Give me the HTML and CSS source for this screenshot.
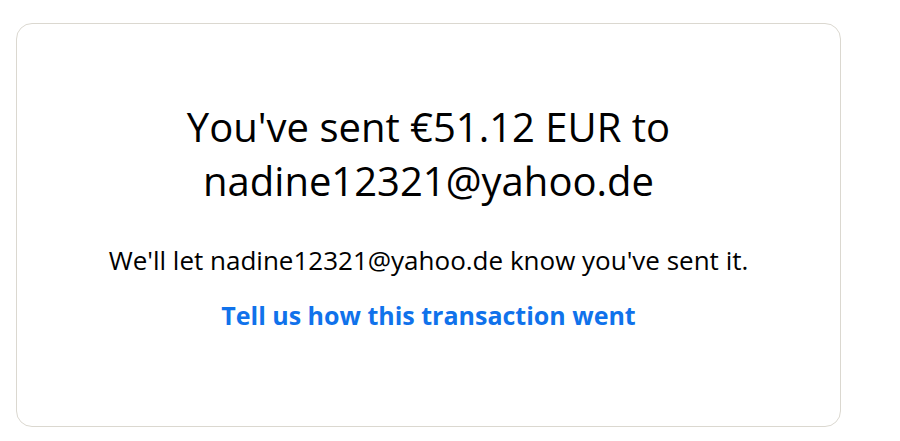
FILE: index.html
```html
<!DOCTYPE html>
<html lang="en">
<head>
<meta charset="utf-8">
<link rel="stylesheet" href="styles.css">
</head>
<body>
<main class="card">
  <h1 class="title">You've sent €51.12 EUR to nadine12321@yahoo.de</h1>
  <p class="note">We'll let nadine12321@yahoo.de know you've sent it.</p>
  <a class="feedback" href="#">Tell us how this transaction went</a>
</main>
</body>
</html>
```

FILE: styles.css
```css
html, body {
  margin: 0;
  padding: 0;
  background: #ffffff;
}
body {
  font-family: "Open Sans", "Noto Sans", sans-serif;
  color: #000000;
  padding: 23px 0 0 16px;
}
.card {
  box-sizing: border-box;
  width: 825px;
  height: 404px;
  border: 1px solid #dbd8d0;
  border-radius: 16px;
  display: flex;
  flex-direction: column;
  align-items: center;
  padding: 76px 40px 0;
}
.title {
  margin: 0;
  max-width: 560px;
  text-align: center;
  font-size: 40px;
  font-weight: 400;
  line-height: 54px;
}
.note {
  margin: 37px 0 0;
  font-size: 26px;
  line-height: 30px;
}
.feedback {
  margin-top: 25px;
  font-size: 25px;
  font-weight: 700;
  line-height: 30px;
  color: #1072eb;
  text-decoration: none;
}
```
